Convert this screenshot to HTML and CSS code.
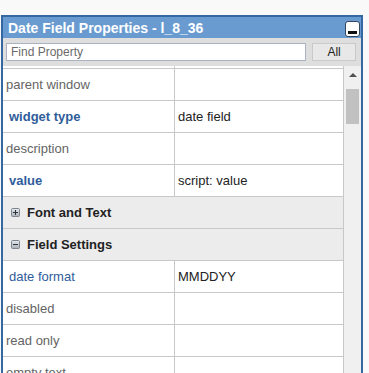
FILE: index.html
```html
<!DOCTYPE html>
<html lang="en">
<head>
    <meta charset="UTF-8">
    <meta name="viewport" content="width=device-width, initial-scale=1.0">
    <title>Date Field Properties</title>
    <link rel="stylesheet" href="styles.css">
</head>
<body>
    <div class="panel">
        <div class="panel-title">
            <span>Date Field Properties - l_8_36</span>
            <button class="min-btn" title="Minimize"><span></span></button>
        </div>

        <div class="search-row">
            <input type="text" class="search-input" placeholder="Find Property">
            <button class="all-btn">All</button>
        </div>

        <div class="grid-body">
            <div class="props">
                <div class="prop-row stub"><div class="prop-name"></div><div class="prop-value"></div></div>

                <div class="prop-row"><div class="prop-name">parent window</div><div class="prop-value"></div></div>
                <div class="prop-row"><div class="prop-name set bold">widget type</div><div class="prop-value">date field</div></div>
                <div class="prop-row"><div class="prop-name">description</div><div class="prop-value"></div></div>
                <div class="prop-row"><div class="prop-name set bold">value</div><div class="prop-value">script: value</div></div>

                <div class="group-row">
                    <svg class="toggle" width="9" height="9" viewBox="0 0 9 9">
                        <defs>
                            <linearGradient id="tg" x1="0" y1="0" x2="0" y2="1">
                                <stop offset="0" stop-color="#e4e8ec"/>
                                <stop offset="1" stop-color="#a9b0b8"/>
                            </linearGradient>
                        </defs>
                        <rect x="0.5" y="0.5" width="8" height="8" rx="1" fill="url(#tg)" stroke="#7d858e"/>
                        <path d="M2 4.5h5M4.5 2v5" stroke="#2f3338" stroke-width="1"/>
                    </svg>
                    Font and Text
                </div>
                <div class="group-row">
                    <svg class="toggle" width="9" height="9" viewBox="0 0 9 9">
                        <rect x="0.5" y="0.5" width="8" height="8" rx="1" fill="url(#tg)" stroke="#7d858e"/>
                        <path d="M2 4.5h5" stroke="#2f3338" stroke-width="1"/>
                    </svg>
                    Field Settings
                </div>

                <div class="prop-row"><div class="prop-name set">date format</div><div class="prop-value">MMDDYY</div></div>
                <div class="prop-row"><div class="prop-name">disabled</div><div class="prop-value"></div></div>
                <div class="prop-row"><div class="prop-name">read only</div><div class="prop-value"></div></div>
                <div class="prop-row"><div class="prop-name">empty text</div><div class="prop-value"></div></div>
            </div>

            <div class="scrollbar">
                <span class="arrow-up"></span>
                <span class="thumb"></span>
            </div>
        </div>
    </div>
</body>
</html>
```

FILE: styles.css
```css
/* Global Styles */
body {
    font-family: 'Liberation Sans', Arial, sans-serif;
    margin: 0;
    padding: 0;
    background-color: #f9f9f9;
    color: #222;
    overflow: hidden;
}

/* Panel */
.panel {
    width: 358px;
    margin: 15px 0 0 1px;
    border: 2px solid #3468a3;
    border-bottom: none;
    background-color: #f0f0f0;
}

.panel-title {
    display: flex;
    align-items: center;
    height: 21px;
    padding-left: 5px;
    background-color: #6a9bd0;
    color: #fff;
    font-size: 14px;
    font-weight: bold;
}

.min-btn {
    position: relative;
    margin: 2px 1px 0 auto;
    width: 15px;
    height: 16px;
    padding: 0;
    border: 1px solid #34475e;
    border-radius: 3px;
    background-color: #fff;
}

.min-btn span {
    position: absolute;
    left: 2px;
    right: 2px;
    bottom: 2px;
    height: 3px;
    background-color: #111;
}

/* Search */
.search-row {
    display: flex;
    gap: 6px;
    height: 28px;
    padding: 5px 5px 0 3px;
    box-sizing: border-box;
    background-color: #dedede;
}

.search-input {
    width: 301px;
    height: 18px;
    box-sizing: border-box;
    margin: 0;
    padding: 0 4px;
    border: 1px solid #aab3c3;
    font-family: inherit;
    font-size: 12px;
    color: #333;
}

.search-input::placeholder {
    color: #6b6b6b;
}

.all-btn {
    width: 44px;
    height: 18px;
    padding: 0;
    border: 1px solid #cacaca;
    background-color: #e8e8e8;
    font-family: inherit;
    font-size: 12px;
    color: #222;
}

/* Property grid */
.grid-body {
    display: flex;
}

.props {
    width: 340px;
    border-right: 1px solid #c8c8c8;
    background-color: #fff;
}

.prop-row {
    display: grid;
    grid-template-columns: 172px 1fr;
    height: 32px;
    border-bottom: 1px solid #c8c8c8;
    box-sizing: border-box;
    font-size: 13px;
}

.prop-row.stub {
    height: 3px;
}

.prop-name {
    display: flex;
    align-items: center;
    padding-left: 3px;
    border-right: 1px solid #c8c8c8;
    color: #646464;
}

.prop-name.set {
    padding-left: 6px;
    color: #2f5d9b;
}

.prop-name.bold {
    font-weight: bold;
}

.prop-value {
    display: flex;
    align-items: center;
    padding-left: 3px;
    color: #222;
}

.group-row {
    display: flex;
    align-items: center;
    gap: 7px;
    height: 32px;
    padding-left: 8px;
    box-sizing: border-box;
    border-bottom: 1px solid #c8c8c8;
    background-color: #ececec;
    font-size: 13px;
    font-weight: bold;
    color: #222;
}

.toggle {
    flex: none;
}

/* Scrollbar */
.scrollbar {
    position: relative;
    width: 17px;
    background-color: #f0f0f0;
}

.arrow-up {
    position: absolute;
    top: 7px;
    left: 5px;
    border-left: 4px solid transparent;
    border-right: 4px solid transparent;
    border-bottom: 4px solid #505050;
}

.thumb {
    position: absolute;
    top: 23px;
    left: 2px;
    width: 13px;
    height: 35px;
    background-color: #c1c1c1;
}
```
